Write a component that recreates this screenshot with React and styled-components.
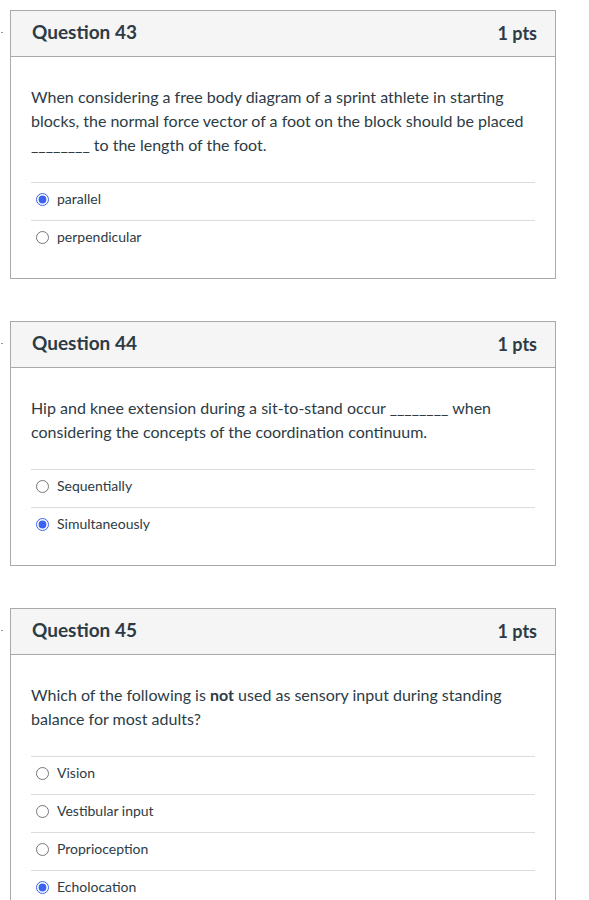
import React from "react";
import styled, { createGlobalStyle } from "styled-components";

const Global = createGlobalStyle`
  html, body { margin: 0; padding: 0; background: #fff; }
  body { font-family: Lato, "Open Sans", "Liberation Sans", sans-serif; color: #2d3b45; }
`;

const Page = styled.div`
  padding: 10px 0 0 10px;
  display: flex;
  flex-direction: column;
  gap: 42px;
`;

const Card = styled.section`
  position: relative;
  width: 544px;
  border: 1px solid #a9a9a9;
  background: #fff;
`;

const Marker = styled.span`
  position: absolute;
  left: -10px;
  top: 21px;
  width: 2px;
  height: 1px;
  background: #8a9aa8;
`;

const Header = styled.header`
  box-sizing: border-box;
  height: 46px;
  border-bottom: 1px solid #a9a9a9;
  background: #f5f5f5;
  display: flex;
  align-items: center;
  justify-content: space-between;
  padding: 0 18px 4px 21px;
`;

const Title = styled.h2`
  margin: 0;
  font-size: 19px;
  font-weight: 700;
  color: #2d3b45;
`;

const Points = styled.span`
  font-size: 18px;
  font-weight: 700;
  color: #2d3b45;
  margin-top: 2px;
`;

const Body = styled.div`
  padding: 28px 20px 20px 20px;
`;

const Text = styled.p`
  margin: 0 0 25px 0;
  font-size: 16px;
  line-height: 24px;
  color: #2d3b45;
`;

const Answers = styled.div`
  display: flex;
  flex-direction: column;
`;

const Answer = styled.label`
  border-top: 1px solid #dcdcdc;
  display: flex;
  align-items: center;
  gap: 8px;
  font-size: 14px;
  color: #2d3b45;
  padding-bottom: 6px;
  box-sizing: border-box;
  height: 38px;
`;

const Radio = styled.input`
  margin: 2px 0 0 5px;
  width: 13px;
  height: 13px;
  accent-color: #3b63f0;
`;

const questions = [
  {
    n: 43,
    text: (
      <>
        When considering a free body diagram of a sprint athlete in starting blocks, the normal
        force vector of a foot on the block should be placed ________ to the length of the foot.
      </>
    ),
    answers: ["parallel", "perpendicular"],
    selected: 0,
  },
  {
    n: 44,
    text: (
      <>
        Hip and knee extension during a sit-to-stand occur ________ when considering the
        concepts of the coordination continuum.
      </>
    ),
    answers: ["Sequentially", "Simultaneously"],
    selected: 1,
  },
  {
    n: 45,
    text: (
      <>
        Which of the following is <strong>not</strong> used as sensory input during standing
        balance for most adults?
      </>
    ),
    answers: ["Vision", "Vestibular input", "Proprioception", "Echolocation"],
    selected: 3,
  },
];

export default function App() {
  return (
    <>
      <Global />
      <Page>
        {questions.map((q) => (
          <Card key={q.n}>
            <Marker />
            <Header>
              <Title>Question {q.n}</Title>
              <Points>1 pts</Points>
            </Header>
            <Body>
              <Text>{q.text}</Text>
              <Answers>
                {q.answers.map((a, i) => (
                  <Answer key={a}>
                    <Radio
                      type="radio"
                      name={`q${q.n}`}
                      checked={i === q.selected}
                      readOnly
                    />
                    {a}
                  </Answer>
                ))}
              </Answers>
            </Body>
          </Card>
        ))}
      </Page>
    </>
  );
}
